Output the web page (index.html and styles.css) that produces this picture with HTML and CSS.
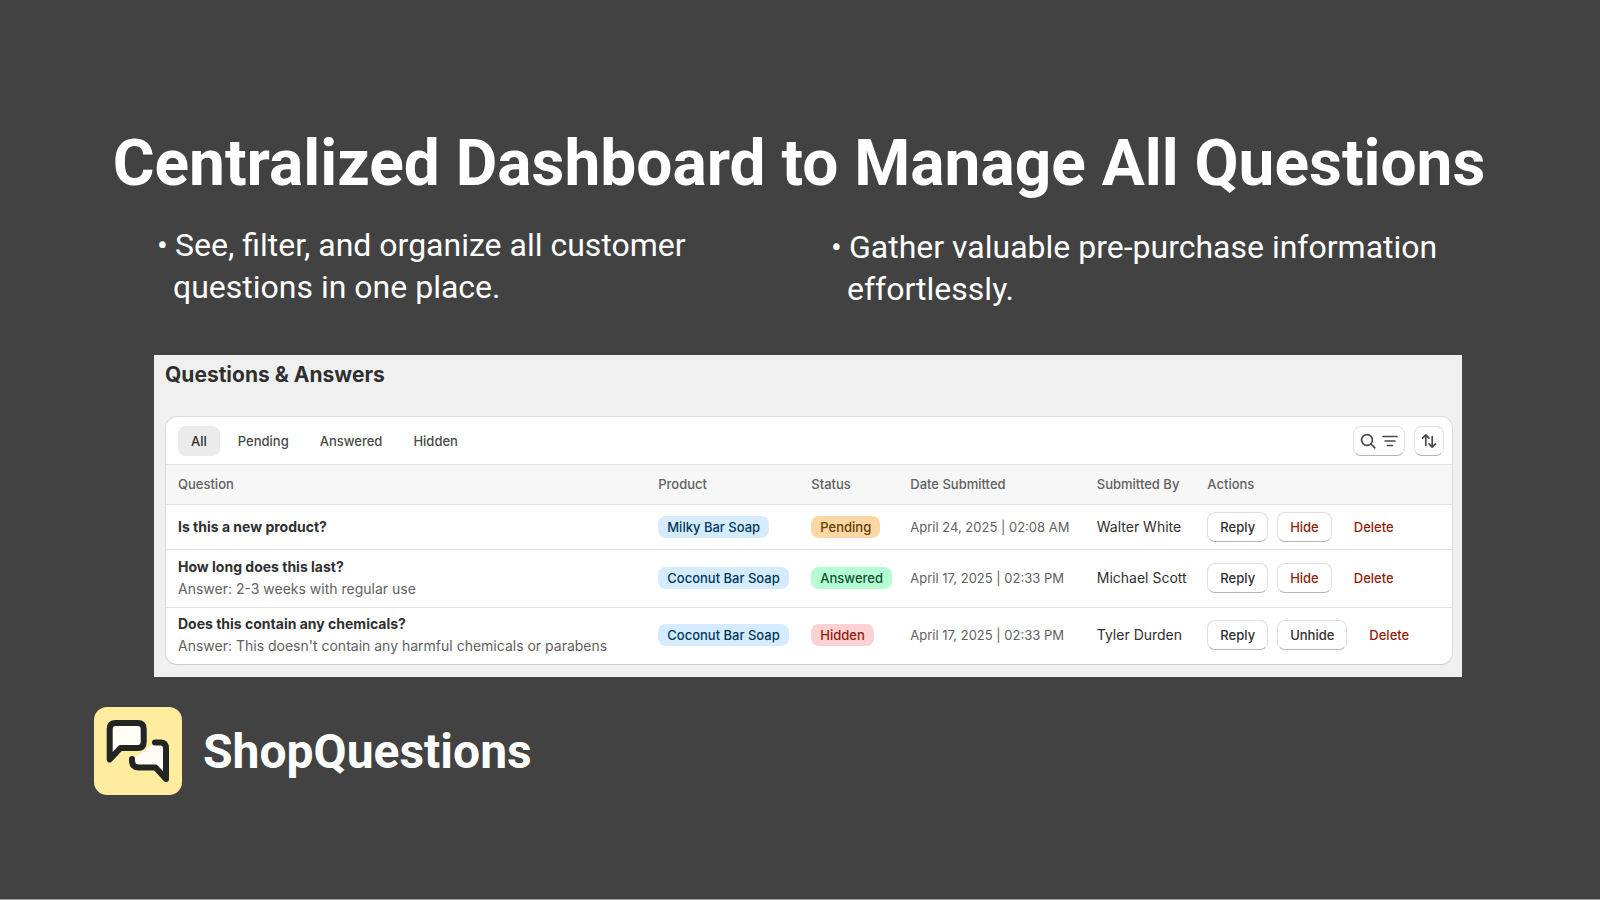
FILE: index.html
```html
<!DOCTYPE html>
<html lang="en">
<head>
    <meta charset="UTF-8">
    <meta name="viewport" content="width=device-width, initial-scale=1.0">
    <title>ShopQuestions</title>
    <link rel="stylesheet" href="styles.css">
</head>
<body>
    <main class="slide">
        <h1 class="slide-title">Centralized Dashboard to Manage All Questions</h1>
        <ul class="features">
            <li>See, filter, and organize all customer<br>questions in one place.</li>
            <li class="feature-right">Gather valuable pre-purchase information<br>effortlessly.</li>
        </ul>

        <section class="panel">
            <h2>Questions &amp; Answers</h2>
            <div class="card">
                <div class="toolbar">
                    <nav class="tabs">
                        <button type="button" class="tab active">All</button>
                        <button type="button" class="tab">Pending</button>
                        <button type="button" class="tab">Answered</button>
                        <button type="button" class="tab">Hidden</button>
                    </nav>
                    <div class="tools">
                        <button type="button" class="btn btn-icon" aria-label="Search and filter">
                            <svg width="16" height="16" viewBox="0 0 16 16"><circle cx="7" cy="7" r="5.4"/><path d="M11 11l3.8 3.8"/></svg>
                            <svg width="16" height="16" viewBox="0 0 16 16"><path d="M1 3.5h14M3.2 8h9.6M5.500 12.500h5"/></svg>
                        </button>
                        <button type="button" class="btn btn-icon" aria-label="Sort">
                            <svg width="16" height="16" viewBox="0 0 16 16"><path d="M4.8 12.500V2M1.5 5.2l3.3-3.4L8 5.2M11.2 3.5V14M8 10.8l3.2 3.4 3.3-3.4"/></svg>
                        </button>
                    </div>
                </div>
                <table class="questions">
                    <colgroup>
                        <col class="col-question">
                        <col class="col-product">
                        <col class="col-status">
                        <col class="col-date">
                        <col class="col-user">
                        <col>
                    </colgroup>
                    <thead>
                        <tr>
                            <th>Question</th>
                            <th>Product</th>
                            <th>Status</th>
                            <th>Date Submitted</th>
                            <th>Submitted By</th>
                            <th>Actions</th>
                        </tr>
                    </thead>
                    <tbody>
                        <tr class="unanswered">
                            <td><strong>Is this a new product?</strong></td>
                            <td><span class="badge info">Milky Bar Soap</span></td>
                            <td><span class="badge pending">Pending</span></td>
                            <td class="date">April 24, 2025 | 02:08 AM</td>
                            <td>Walter White</td>
                            <td>
                                <div class="actions">
                                    <button type="button" class="btn">Reply</button>
                                    <button type="button" class="btn critical">Hide</button>
                                    <button type="button" class="btn plain critical">Delete</button>
                                </div>
                            </td>
                        </tr>
                        <tr>
                            <td><strong>How long does this last?</strong><p>Answer: 2-3 weeks with regular use</p></td>
                            <td><span class="badge info">Coconut Bar Soap</span></td>
                            <td><span class="badge answered">Answered</span></td>
                            <td class="date">April 17, 2025 | 02:33 PM</td>
                            <td>Michael Scott</td>
                            <td>
                                <div class="actions">
                                    <button type="button" class="btn">Reply</button>
                                    <button type="button" class="btn critical">Hide</button>
                                    <button type="button" class="btn plain critical">Delete</button>
                                </div>
                            </td>
                        </tr>
                        <tr>
                            <td><strong>Does this contain any chemicals?</strong><p>Answer: This doesn't contain any harmful chemicals or parabens</p></td>
                            <td><span class="badge info">Coconut Bar Soap</span></td>
                            <td><span class="badge hidden">Hidden</span></td>
                            <td class="date">April 17, 2025 | 02:33 PM</td>
                            <td>Tyler Durden</td>
                            <td>
                                <div class="actions">
                                    <button type="button" class="btn">Reply</button>
                                    <button type="button" class="btn">Unhide</button>
                                    <button type="button" class="btn plain critical">Delete</button>
                                </div>
                            </td>
                        </tr>
                    </tbody>
                </table>
            </div>
        </section>

        <footer class="brand">
            <svg class="brand-logo" viewBox="0 0 88 88">
                <rect width="88" height="88" rx="13" fill="#ffec9e"/>
                <g stroke="#232522" stroke-width="6" stroke-linecap="round" stroke-linejoin="round">
                    <path fill="#fffdf5" d="M15.700 52.500V22q0-6 6-6h22q6 0 6 6v13q0 6-6 6H26.500z"/>
                    <path fill="#fffdf5" stroke="none" d="M39 52l20-15h13V68L62 60H43q-4 0-4-5z"/>
                    <path fill="none" d="M61 35.500h5.500q5.500 0 5.500 6V72L61.500 60.500H45q-7 0-7-7V52"/>
                </g>
            </svg>
            <span class="brand-name">ShopQuestions</span>
        </footer>
    </main>
</body>
</html>
```
FILE: styles.css
```css
* {
    box-sizing: border-box;
}
body {
    margin: 0;
    background: #424242;
    font-family: Inter, sans-serif;
}
.slide {
    min-height: 100vh;
    padding: 126px 138px 80px 154px;
    border-bottom: 1px solid #a0a0a0;
}
.slide-title {
    margin: 0 -136px 0 -154px;
    font: 700 64px/76px Roboto, sans-serif;
    color: #fff;
    text-align: center;
}
.features {
    display: grid;
    grid-template-columns: 674px 1fr;
    margin: 22px 0 0;
    padding: 0 0 0 19px;
    list-style: none;
    font: 400 32px/42px Roboto, sans-serif;
    color: #fff;
}
.features li::before {
    content: "•";
    display: inline-block;
    width: 18px;
    margin-left: -16px;
}
.feature-right {
    padding-top: 2px;
}
.panel {
    margin-top: 45px;
    padding: 8px 9px 12px 11px;
    background: #f0f0f0;
}
.panel h2 {
    margin: 0 0 29px;
    font-size: 21px;
    line-height: 24px;
    font-weight: 700;
    color: #303030;
}
.card {
    overflow: hidden;
    border: 1px solid #dcdcdc;
    border-bottom-color: #ccc;
    border-radius: 12px;
    background: #fff;
}
.toolbar {
    display: flex;
    justify-content: space-between;
    align-items: center;
    height: 47px;
    padding: 0 8px 0 12px;
}
.tabs {
    display: flex;
    gap: 5px;
}
.tools,
.actions {
    display: flex;
    gap: 9px;
}
.tab {
    height: 30px;
    padding: 0 13px;
    border: 0;
    border-radius: 8px;
    background: none;
    font: 500 13px/20px Inter, sans-serif;
    color: #4a4a4a;
}
.tab.active {
    background: #ebebeb;
    color: #303030;
}
.btn {
    height: 30px;
    padding: 0 12px;
    border: 1px solid #e0e0e0;
    border-bottom-color: #b5b5b5;
    border-radius: 8px;
    background: #fff;
    font: 500 13px/20px Inter, sans-serif;
    color: #303030;
}
.btn.critical {
    color: #8e1f0b;
}
.btn.plain {
    border-color: transparent;
    background: none;
}
.btn.btn-icon {
    display: flex;
    gap: 6px;
    align-items: center;
    padding: 0 6px;
}
.btn-icon svg {
    fill: none;
    stroke: #4a4a4a;
    stroke-width: 1.7;
    stroke-linecap: round;
    stroke-linejoin: round;
}
.questions {
    width: 100%;
    border-collapse: collapse;
    table-layout: fixed;
    font-size: 14px;
    line-height: 22px;
    color: #303030;
}
.col-question {
    width: 37.5%;
}
.col-product {
    width: 11.9%;
}
.col-status {
    width: 7.7%;
}
.col-date {
    width: 14.5%;
}
.col-user {
    width: 8.6%;
}
.questions th,
.questions td {
    padding: 5px 0 6px 10px;
    border-top: 1px solid #e3e3e3;
    text-align: left;
    white-space: nowrap;
}
.questions td {
    height: 58px;
}
.questions .unanswered td {
    height: 45px;
}
.questions tr:last-child td {
    height: 56px;
}
.questions th:first-child,
.questions td:first-child {
    padding-left: 12px;
}
.questions thead th {
    height: 40px;
    background: #f7f7f7;
    font-size: 13px;
    font-weight: 500;
    color: #616161;
}
.questions strong {
    font-weight: 700;
}
.questions p {
    margin: 0;
    color: #616161;
}
.questions .date {
    font-size: 13px;
    color: #616161;
}
.badge {
    display: inline-block;
    padding: 0 9px;
    border-radius: 8px;
    font-size: 13px;
    line-height: 22px;
    font-weight: 500;
}
.info {
    background: #d5ebff;
    color: #003a5a;
}
.pending {
    background: #ffd6a4;
    color: #5e4200;
}
.answered {
    background: #b4fed2;
    color: #0c5132;
}
.hidden {
    background: #fed1d3;
    color: #8e1f0b;
}
.brand {
    display: flex;
    align-items: center;
    gap: 21px;
    margin: 30px 0 0 -60px;
}
.brand-logo {
    width: 88px;
    height: 88px;
}
.brand-name {
    padding-top: 3px;
    font: 700 48px/56px Roboto, sans-serif;
    color: #fff;
}
```
